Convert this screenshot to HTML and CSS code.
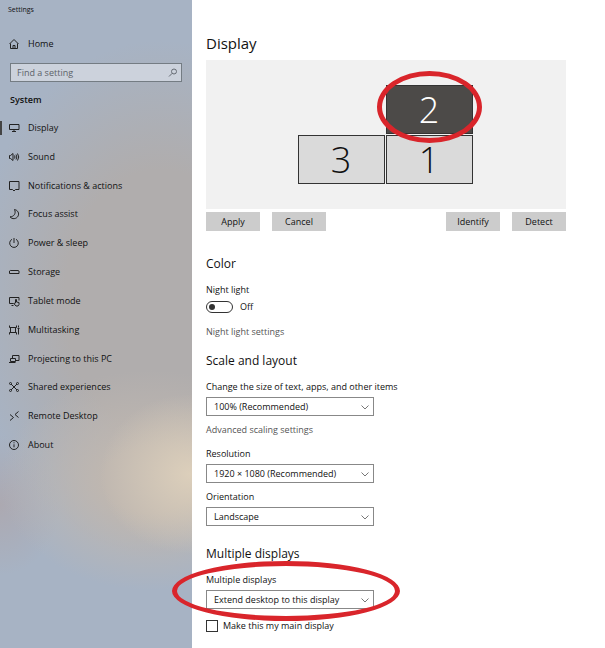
FILE: index.html
```html
<!DOCTYPE html>
<html lang="en">
<head>
    <meta charset="UTF-8">
    <meta name="viewport" content="width=device-width, initial-scale=1.0">
    <title>Settings</title>
    <link rel="stylesheet" href="styles.css">
</head>
<body>
    <div class="window">
        <aside class="sidebar">
            <div class="app-title">Settings</div>
            <a href="#" class="nav-link home">
                <svg class="icon" viewBox="0 0 12 12"><path d="M1.500 6 6 1.500 10.500 6M2.500 5.500v5h7v-5M5 10.500v-3h2v3"/></svg>
                Home
            </a>
            <div class="search">
                <input type="text" placeholder="Find a setting" aria-label="Find a setting">
                <svg class="search-icon" viewBox="0 0 10 10"><circle cx="6" cy="3.500" r="2.500"/><path d="M4.200 5.300 1 8.500"/></svg>
            </div>
            <h2 class="category">System</h2>
            <nav class="nav">
                <a href="#" class="nav-link active">
                    <svg class="icon" viewBox="0 0 12 12"><path d="M1.500 2.500h9.500v5h-9.500zM6 7.500v2M4 9.500h4"/></svg>
                    Display
                </a>
                <a href="#" class="nav-link">
                    <svg class="icon" viewBox="0 0 12 12"><path d="M1.500 4.500h1L5 2.500v7L2.500 7.500h-1zM6.500 4.500q1 1.500 0 3M8 3.500q1.700 2.500 0 5M9.500 2.500q2.500 3.500 0 7"/></svg>
                    Sound
                </a>
                <a href="#" class="nav-link">
                    <svg class="icon" viewBox="0 0 12 12"><path d="M1.500 1.500h9.500v8H7.500L6 11 4.500 9.500h-3z"/></svg>
                    Notifications &amp; actions
                </a>
                <a href="#" class="nav-link">
                    <svg class="icon" viewBox="0 0 12 12"><path d="M6.500 1.500C10 2.200 11.500 5.500 10 8.200 8.300 11.200 4.200 11.500 2 8.800 5.500 9 8.500 5.500 6.500 1.500z"/></svg>
                    Focus assist
                </a>
                <a href="#" class="nav-link">
                    <svg class="icon" viewBox="0 0 12 12"><path d="M6 1v5M4 2.300a4.300 4.300 0 1 0 4 0"/></svg>
                    Power &amp; sleep
                </a>
                <a href="#" class="nav-link">
                    <svg class="icon" viewBox="0 0 12 12"><path d="M1.500 7.500V5l.8-.5h7.900l.8.500v2.500z"/></svg>
                    Storage
                </a>
                <a href="#" class="nav-link">
                    <svg class="icon" viewBox="0 0 12 12"><path d="M5.500 8.500h-4v-6h9.500v3M3.500 10.500h2M7.500 8V4.500h1v2.500l2.500.5v2L10 11H8L5.800 8.500z"/></svg>
                    Tablet mode
                </a>
                <a href="#" class="nav-link">
                    <svg class="icon" viewBox="0 0 12 12"><path d="M2.500 3.500h5v5h-5zM1.500 1.500v2h7v-2M1.500 10.500v-2h7v2M10.500 1.500v2M10.500 5v5.500M9.500 4.500h2"/></svg>
                    Multitasking
                </a>
                <a href="#" class="nav-link">
                    <svg class="icon" viewBox="0 0 12 12"><path d="M4.500 5.500v-3H11v5H7.500M2.500 5.500h5v3h-5zM1 9.500h6.500"/></svg>
                    Projecting to this PC
                </a>
                <a href="#" class="nav-link">
                    <svg class="icon" viewBox="0 0 12 12"><path d="m3 3 6 6M9 3 3 9"/><circle cx="2.500" cy="2.500" r="1"/><circle cx="9.500" cy="2.500" r="1"/><circle cx="2.500" cy="9.500" r="1"/><circle cx="9.500" cy="9.500" r="1"/></svg>
                    Shared experiences
                </a>
                <a href="#" class="nav-link">
                    <svg class="icon" viewBox="0 0 12 12"><path d="m2 4.500 3.500 3L2 10.500M10.500 1.500 7 4.500l3.500 3"/></svg>
                    Remote Desktop
                </a>
                <a href="#" class="nav-link">
                    <svg class="icon" viewBox="0 0 12 12"><circle cx="6" cy="6" r="4.500"/><path d="M6 5.300v3M6 3.300v1"/></svg>
                    About
                </a>
            </nav>
        </aside>

        <main class="content">
            <h1>Display</h1>
            <div class="monitors">
                <div class="monitor selected">2<span class="mark mark-monitor"></span></div>
                <div class="monitor">3</div>
                <div class="monitor">1</div>
            </div>
            <div class="actions">
                <button type="button">Apply</button>
                <button type="button">Cancel</button>
                <button type="button" class="push-right">Identify</button>
                <button type="button">Detect</button>
            </div>

            <section class="color">
                <h2>Color</h2>
                <label for="nightLight">Night light</label>
                <div class="toggle">
                    <input type="checkbox" id="nightLight" role="switch">
                    <span>Off</span>
                </div>
                <a href="#" class="sub-link">Night light settings</a>
            </section>

            <section class="scale">
                <h2>Scale and layout</h2>
                <label for="scale">Change the size of text, apps, and other items</label>
                <div class="select">
                    <select id="scale"><option>100% (Recommended)</option></select>
                    <svg viewBox="0 0 8 8"><path d="m.5 2.500 3.500 3.500 3.500-3.500"/></svg>
                </div>
                <a href="#" class="sub-link">Advanced scaling settings</a>
                <label for="resolution" class="resolution-label">Resolution</label>
                <div class="select">
                    <select id="resolution"><option>1920 × 1080 (Recommended)</option></select>
                    <svg viewBox="0 0 8 8"><path d="m.5 2.500 3.500 3.500 3.500-3.500"/></svg>
                </div>
                <label for="orientation" class="orientation-label">Orientation</label>
                <div class="select">
                    <select id="orientation"><option>Landscape</option></select>
                    <svg viewBox="0 0 8 8"><path d="m.5 2.500 3.500 3.500 3.500-3.500"/></svg>
                </div>
            </section>

            <section class="multiple">
                <h2>Multiple displays</h2>
                <label for="multiple">Multiple displays</label>
                <div class="select">
                    <select id="multiple"><option>Extend desktop to this display</option></select>
                    <svg viewBox="0 0 8 8"><path d="m.5 2.500 3.500 3.500 3.500-3.500"/></svg>
                    <span class="mark mark-select"></span>
                </div>
                <label class="check"><input type="checkbox"> Make this my main display</label>
            </section>
        </main>
    </div>
</body>
</html>
```
FILE: styles.css
```css
* {
    box-sizing: border-box;
}
body {
    margin: 0;
    font-family: "Open Sans", "Noto Sans", sans-serif;
    font-size: 9px;
    line-height: 12px;
    color: #111;
    background-color: #fff;
}
h1, h2 {
    margin: 0;
    font-weight: normal;
}
a {
    color: inherit;
    text-decoration: none;
}
input, select, button {
    font: inherit;
    color: inherit;
    border-radius: 0;
    margin: 0;
}
.window {
    display: flex;
    min-height: 100vh;
}

/* Sidebar */
.sidebar {
    flex: 0 0 192px;
    padding-top: 4px;
    background-color: #a7b3c4;
    background-image:
        radial-gradient(ellipse 90px 80px at 190px 474px, #dccfbb 0%, rgba(220, 207, 187, 0) 100%),
        radial-gradient(ellipse 150px 110px at 150px 480px, #bfb7b0 30%, rgba(191, 183, 176, 0) 100%),
        radial-gradient(ellipse 190px 260px at 160px 300px, #b0adad 50%, rgba(176, 173, 173, 0) 100%),
        radial-gradient(ellipse 60px 70px at 0 505px, #aca9b1 0%, rgba(172, 169, 177, 0) 100%);
}
.app-title {
    padding-left: 8px;
    font-size: 7px;
}
.nav-link {
    display: flex;
    align-items: center;
    gap: 8px;
    height: 18px;
    padding-left: 8px;
}
.icon {
    width: 12px;
    height: 12px;
    fill: none;
    stroke: #222;
    stroke-width: 1;
}
.home {
    margin-top: 19px;
}
.search {
    position: relative;
    margin: 10px 10px 0;
}
.search input {
    display: block;
    width: 100%;
    height: 19px;
    padding: 0 24px 0 6px;
    border: 1px solid #747c83;
    background-color: #ccd2dc;
}
.search input::placeholder {
    color: #5c6269;
    opacity: 1;
}
.search-icon {
    position: absolute;
    top: 5px;
    right: 4px;
    width: 10px;
    height: 10px;
    fill: none;
    stroke: #666c74;
}
.category {
    margin: 12px 0 0 10px;
    font-size: 9px;
    font-weight: 600;
}
.nav {
    display: flex;
    flex-direction: column;
    justify-content: space-between;
    height: 335px;
    margin-top: 13px;
}
.active {
    position: relative;
}
.active::before {
    content: "";
    position: absolute;
    left: 0;
    top: 2px;
    width: 2px;
    height: 14px;
    background-color: #444;
}

/* Main column */
.content {
    flex: 1;
    padding: 32px 39px 12px 14px;
}
h1 {
    font-size: 15px;
    line-height: 22px;
}
.content h2 {
    font-size: 12px;
    line-height: 16px;
}
.monitors {
    display: grid;
    grid-template-columns: 87px 87px;
    grid-auto-rows: 49px;
    gap: 1px;
    place-content: center;
    height: 149px;
    margin-top: 6px;
    padding-right: 2px;
    background-color: #f1f1f1;
}
.monitor {
    display: flex;
    align-items: center;
    justify-content: center;
    border: 1px solid #333;
    background-color: #dadada;
    font-size: 36px;
    font-weight: 300;
}
.selected {
    grid-column: 2;
    position: relative;
    background-color: #4c4a48;
    color: #fff;
}
.mark {
    position: absolute;
    border: 5px solid #d9252b;
    border-radius: 50%;
    pointer-events: none;
}
.mark-monitor {
    inset: -15px -10px -10px;
}
.actions {
    display: flex;
    gap: 12px;
    margin-top: 3px;
}
.actions button {
    width: 54px;
    height: 19px;
    padding: 0;
    border: none;
    background-color: #ccc;
}
.actions .push-right {
    margin-left: auto;
}
section label, .sub-link {
    display: block;
    width: fit-content;
}
.sub-link {
    color: #555;
}
.color {
    margin-top: 25px;
}
.color label {
    margin-top: 12px;
}
.toggle {
    display: flex;
    align-items: center;
    gap: 7px;
    margin-top: 5px;
}
.toggle input {
    appearance: none;
    display: flex;
    align-items: center;
    width: 27px;
    height: 12px;
    padding-left: 2px;
    border: 1px solid #333;
    border-radius: 6px;
}
.toggle input::before {
    content: "";
    width: 6px;
    height: 6px;
    border-radius: 50%;
    background-color: #333;
}
.color .sub-link {
    margin-top: 13px;
}
.scale {
    margin-top: 15px;
}
.scale h2 + label {
    margin-top: 12px;
}
.select {
    position: relative;
    width: 168px;
    margin-top: 4px;
}
.select select {
    appearance: none;
    display: block;
    width: 100%;
    height: 19px;
    padding: 0 20px 0 7px;
    border: 1px solid #888;
    background-color: #fff;
}
.select svg {
    position: absolute;
    top: 6px;
    right: 5px;
    width: 8px;
    height: 8px;
    fill: none;
    stroke: #777;
}
.scale .sub-link {
    margin-top: 8px;
}
.resolution-label {
    margin-top: 12px;
}
.orientation-label {
    margin-top: 8px;
}
.multiple {
    margin-top: 20px;
}
.multiple h2 + label {
    margin-top: 12px;
}
.mark-select {
    inset: -29px -26px -12px -34px;
}
.multiple .check {
    display: flex;
    align-items: center;
    gap: 5px;
    margin-top: 11px;
}
.check input {
    appearance: none;
    width: 12px;
    height: 12px;
    border: 1px solid #333;
    background-color: #fff;
}
```
